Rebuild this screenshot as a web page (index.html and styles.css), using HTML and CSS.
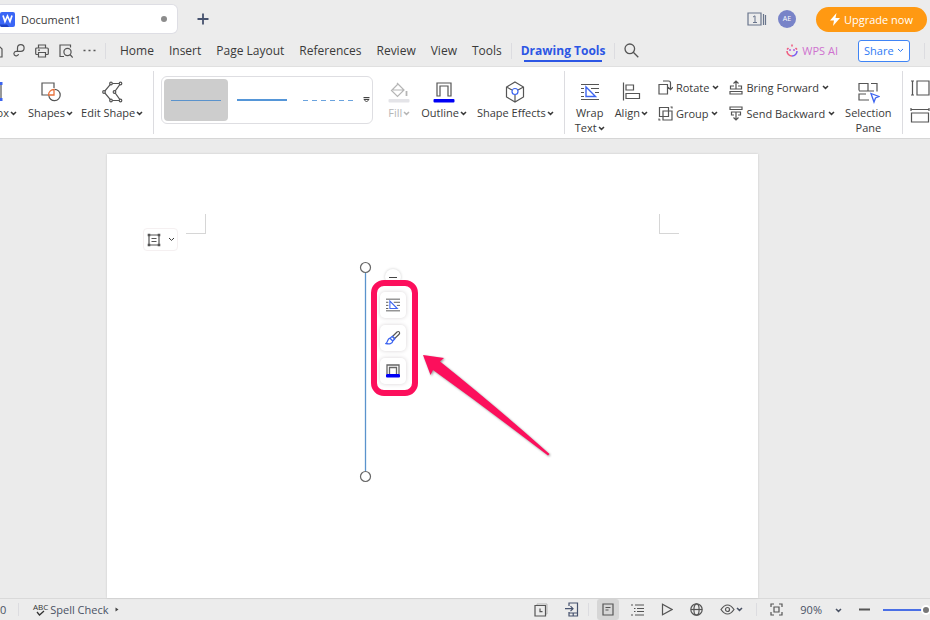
FILE: index.html
```html
<!DOCTYPE html>
<html lang="en">
<head>
    <meta charset="UTF-8">
    <meta name="viewport" content="width=device-width, initial-scale=1.0">
    <title>Document1</title>
    <link rel="stylesheet" href="styles.css">
</head>
<body>
    <!-- shared icons -->
    <svg class="defs" width="0" height="0">
        <symbol id="chev" viewBox="0 0 7 5"><path d="M1 1l2.500 2.400L6 1" fill="none" stroke="currentColor"/></symbol>
        <symbol id="wrap" viewBox="0 0 20 18">
            <path d="M1 1.500h18M1 5.500h3M11 5.500h8M1 9.500h3M15 9.500h4M1 13.500h3M1 16.500h18" fill="none" stroke="#555" stroke-width="1.200"/>
            <path d="M6 4v9.500h9.500z" fill="#fff" stroke="#3c64f0" stroke-width="1.400"/>
        </symbol>
    </svg>

    <header class="titlebar">
        <div class="doc-tab">
            <svg width="15" height="15" viewBox="0 0 15 15"><rect width="15" height="15" rx="2" fill="#3a66f6"/><path d="M0 12.500h7l2 2.500H2a2 2 0 0 1-2-2z" fill="#1d40c4"/><path d="M3 3.500l2 6 2.500-5.500 2.500 5.500 2-6" fill="none" stroke="#fff" stroke-width="1.700"/></svg>
            <span class="doc-name">Document1</span>
            <span class="dirty"></span>
        </div>
        <button class="icon-btn new-tab" aria-label="New tab">
            <svg width="12" height="12" viewBox="0 0 12 12"><path d="M6 .5v11M.5 6h11" stroke="#46526e" stroke-width="1.800"/></svg>
        </button>
        <div class="account">
            <button class="icon-btn" aria-label="Windows">
                <svg width="20" height="14" viewBox="0 0 20 14"><path d="M1 1h13v12H1zM16.500 2v11M18.500 3v10" fill="none" stroke="#69758c" stroke-width="1.200"/><path d="M6 5l2-1.200V10.500M6 10.500h4" fill="none" stroke="#69758c"/></svg>
            </button>
            <span class="avatar">AE</span>
            <button class="upgrade">
                <svg width="10" height="13" viewBox="0 0 10 13"><path d="M6.500 0L0 7.500h4L3 13l7-8H5.500z" fill="#fff"/></svg>
                Upgrade now
            </button>
        </div>
    </header>

    <nav class="menubar">
        <div class="quick">
            <button class="icon-btn save" aria-label="Save">
                <svg width="15" height="14" viewBox="0 0 15 14"><path d="M1 1h9l4 4v8H1zM4 13V8h6v5" fill="none" stroke="#555" stroke-width="1.200"/></svg>
            </button>
            <button class="icon-btn" aria-label="Export">
                <svg width="12" height="14" viewBox="0 0 12 14"><path d="M4.500 7.500V4a3.300 3.300 0 1 1 3.300 3.300H3.500A2.300 2.300 0 1 0 5.500 10" fill="none" stroke="#555" stroke-width="1.200"/></svg>
            </button>
            <button class="icon-btn" aria-label="Print">
                <svg width="14" height="14" viewBox="0 0 14 14"><path d="M3.500 4V1h7v3M3.500 10.500H1.700a1 1 0 0 1-1-1V5a1 1 0 0 1 1-1h10.600a1 1 0 0 1 1 1v4.500a1 1 0 0 1-1 1H10.500M3.500 8.500h7V13h-7zM3 6.200h2" fill="none" stroke="#555" stroke-width="1.200"/></svg>
            </button>
            <button class="icon-btn" aria-label="Print preview">
                <svg width="14" height="14" viewBox="0 0 14 14"><path d="M11.500 3.500V1H1v11.500h4" fill="none" stroke="#555" stroke-width="1.200"/><circle cx="8.500" cy="8" r="3.600" fill="none" stroke="#555" stroke-width="1.200"/><path d="M11 10.500l2.700 3" stroke="#555" stroke-width="1.200"/></svg>
            </button>
            <button class="icon-btn" aria-label="More">
                <svg width="13" height="3" viewBox="0 0 13 3"><path d="M.5.7h2v1.600h-2zM5.500.7h2v1.600h-2zM10.500.7h2v1.600h-2z" fill="#555"/></svg>
            </button>
        </div>
        <span class="sep short"></span>
        <div class="tabs">
            <button class="tab">Home</button>
            <button class="tab">Insert</button>
            <button class="tab">Page Layout</button>
            <button class="tab">References</button>
            <button class="tab">Review</button>
            <button class="tab">View</button>
            <button class="tab">Tools</button>
        </div>
        <span class="sep short"></span>
        <button class="tab active">Drawing Tools</button>
        <span class="sep short"></span>
        <button class="icon-btn" aria-label="Search">
            <svg width="15" height="15" viewBox="0 0 15 15"><circle cx="5.800" cy="5.800" r="4.800" fill="none" stroke="#555" stroke-width="1.300"/><path d="M9.300 9.300l5 5" stroke="#555" stroke-width="1.300"/></svg>
        </button>
        <div class="menu-right">
            <button class="ai">
                <svg width="12" height="13" viewBox="0 0 12 13" fill="none" stroke-width="1.500"><path d="M2.500 4L1 5.500M6 .5v2M9.500 4L11 5.500" stroke="#f0567c"/><path d="M1 7a5 4.800 0 0 0 5 5" stroke="#ef5b7e"/><path d="M6 12a5 4.800 0 0 0 5-5" stroke="#7a5cf0"/><path d="M4 5v2M8 5v2" stroke="#b45ce0"/></svg>
                WPS AI
            </button>
            <button class="share">Share <svg class="chev thin"><use href="#chev"/></svg></button>
            <span class="sep short"></span>
        </div>
    </nav>

    <section class="ribbon">
        <div class="group first">
            <button class="tool textbox">
                <svg width="24" height="24" viewBox="0 0 24 24"><path d="M4 3v17M20 3v17" stroke="#555" stroke-width="1.200"/><path d="M2.500 2h3v3h-3zM18.500 2h3v3h-3zM2.500 18h3v3h-3zM18.500 18h3v3h-3z" fill="#3c64f0"/></svg>
                <span>Text Box<svg class="chev"><use href="#chev"/></svg></span>
            </button>
            <button class="tool">
                <svg width="24" height="24" viewBox="0 0 24 24"><path d="M10 15H3V3h12v5" fill="none" stroke="#555" stroke-width="1.200"/><path d="M15.500 9.300a5.700 5.700 0 1 1-5.700 6" fill="none" stroke="#555" stroke-width="1.200"/><path d="M9.500 15a5.500 5.500 0 0 1 5.500-5.500V15z" fill="none" stroke="#e8703a" stroke-width="1.300"/></svg>
                <span>Shapes<svg class="chev"><use href="#chev"/></svg></span>
            </button>
            <button class="tool">
                <svg width="24" height="24" viewBox="0 0 24 24"><g fill="#fff" stroke="#555" stroke-width="1.200"><path d="M11 3.500h9.500L14.500 12l6 8.500H11L4 12z"/><circle cx="11" cy="3.500" r="1.300"/><circle cx="20.500" cy="3.500" r="1.300"/><circle cx="14.500" cy="12" r="1.300"/><circle cx="20.500" cy="20.500" r="1.300"/><circle cx="11" cy="20.500" r="1.300"/><circle cx="4" cy="12" r="1.300"/></g></svg>
                <span>Edit Shape<svg class="chev"><use href="#chev"/></svg></span>
            </button>
        </div>
        <span class="sep"></span>
        <div class="gallery">
            <button class="line-style selected" aria-label="Thin line"><span class="line"></span></button>
            <button class="line-style" aria-label="Thick line"><span class="line thick"></span></button>
            <button class="line-style" aria-label="Dashed line"><span class="line dashed"></span></button>
            <button class="icon-btn more" aria-label="More styles">
                <svg width="7" height="6" viewBox="0 0 7 6"><path d="M.5.600h6" stroke="#444" stroke-width="1.200"/><path d="M1 2.500h5L3.500 5z" fill="none" stroke="#444"/></svg>
            </button>
        </div>
        <div class="group">
            <button class="tool" disabled>
                <svg width="24" height="24" viewBox="0 0 24 24"><path d="M10 3l7 7-6.500 6.500-6-6L11 4M17 10H6" fill="none" stroke="#b5b5b5" stroke-width="1.200"/><path d="M19.500 11v5" stroke="#b5b5b5" stroke-width="1.800"/><rect x="1.500" y="19" width="21" height="3.500" rx="1" fill="#e4e4e8"/></svg>
                <span>Fill<svg class="chev"><use href="#chev"/></svg></span>
            </button>
            <button class="tool">
                <svg width="24" height="24" viewBox="0 0 24 24"><path d="M5 16V3h14v13h-3V6H8v10z" fill="none" stroke="#555" stroke-width="1.200"/><rect x="1.500" y="19" width="21" height="3.500" rx="1" fill="#0000f5"/></svg>
                <span>Outline<svg class="chev"><use href="#chev"/></svg></span>
            </button>
            <button class="tool">
                <svg width="24" height="24" viewBox="0 0 24 24"><path d="M12 2l8.500 5v10L12 22l-8.500-5V7zM3.500 7L9 10M20.500 7L15 10M12 15v7" fill="none" stroke="#555" stroke-width="1.200"/><circle cx="12" cy="11.500" r="3" fill="none" stroke="#3c64f0" stroke-width="1.200"/></svg>
                <span>Shape Effects<svg class="chev"><use href="#chev"/></svg></span>
            </button>
        </div>
        <span class="sep"></span>
        <div class="group">
            <button class="tool">
                <svg width="24" height="24" viewBox="-2 -3 24 24"><use href="#wrap" width="20" height="18"/></svg>
                <span>Wrap<br>Text<svg class="chev"><use href="#chev"/></svg></span>
            </button>
            <button class="tool">
                <svg width="24" height="24" viewBox="0 0 24 24"><path d="M4.500 2.500v18M7 5h7.500v5H7zM7 13.500h13.500v5H7z" fill="none" stroke="#555" stroke-width="1.200"/></svg>
                <span>Align<svg class="chev"><use href="#chev"/></svg></span>
            </button>
            <div class="stack">
                <button class="row-tool">
                    <svg width="15" height="15" viewBox="0 0 15 15"><path d="M1 4.500h8.500V14H1zM5 1h5.500q2 0 2 2v6.500M10 7.200l2.500 2.500L15 7.200" fill="none" stroke="#555" stroke-width="1.200"/></svg>
                    Rotate<svg class="chev"><use href="#chev"/></svg>
                </button>
                <button class="row-tool">
                    <svg width="15" height="15" viewBox="0 0 15 15"><path d="M1.500 1.500h9v9h-9zM5 5h9v9H5z" fill="none" stroke="#555" stroke-width="1.200"/><path d="M12.500 1h1.500v1.500M1 12.500V14h1.500" fill="none" stroke="#555" stroke-width="1.200"/></svg>
                    Group<svg class="chev"><use href="#chev"/></svg>
                </button>
            </div>
            <div class="stack">
                <button class="row-tool">
                    <svg width="14" height="15" viewBox="0 0 14 15"><path d="M1 11.500h12v2.500H1zM7 9V1M4.500 3.500L7 1l2.500 2.500M5 6H1.500v3h11V6H9" fill="none" stroke="#555" stroke-width="1.200"/></svg>
                    Bring Forward<svg class="chev"><use href="#chev"/></svg>
                </button>
                <button class="row-tool">
                    <svg width="14" height="15" viewBox="0 0 14 15"><path d="M1 1h12v2.500H1zM7 6v8M4.500 11.500L7 14l2.500-2.500M5 9H2.500V6h9v3H9" fill="none" stroke="#555" stroke-width="1.200"/></svg>
                    Send Backward<svg class="chev"><use href="#chev"/></svg>
                </button>
            </div>
            <button class="tool">
                <svg width="24" height="24" viewBox="0 0 24 24"><path d="M3 10.500V3.500h9v7.500H3M15 3.500h6v8M3 14v6h10M12 11h6M3 17v-3h7" fill="none" stroke="#555" stroke-width="1.200"/><path d="M15 13.500l8 3-3.500 1.500-1.500 4z" fill="#fff" stroke="#3c64f0" stroke-width="1.300"/></svg>
                <span>Selection<br>Pane</span>
            </button>
        </div>
        <span class="sep"></span>
        <div class="stack size">
            <svg width="24" height="16" viewBox="0 0 24 16"><path d="M2.500 1v14M1 1h3M1 15h3M7 1h12v14H7z" fill="none" stroke="#555" stroke-width="1.200"/></svg>
            <svg width="24" height="16" viewBox="0 0 24 16"><path d="M1 2.500h18M1 1v3M19 1v3M1.500 6h17v9h-17z" fill="none" stroke="#555" stroke-width="1.200"/></svg>
        </div>
    </section>

    <main class="workspace">
        <div class="page">
            <div class="corners">
                <span class="corner left"></span>
                <span class="corner right"></span>
            </div>
            <div class="layout-opts">
                <button class="icon-btn" aria-label="Layout options">
                    <svg width="14" height="14" viewBox="0 0 14 14"><path d="M2 2h10v10H2zM4.500 5.500h5M4.500 8.500h5" fill="none" stroke="#555" stroke-width="1.200"/><path d="M.7.700h2.600v2.600H.7zM10.700.700h2.600v2.600h-2.600zM.7 10.700h2.600v2.600H.7zM10.700 10.700h2.600v2.600h-2.600z" fill="#555"/></svg>
                </button>
                <button class="icon-btn" aria-label="Layout menu"><svg class="chev thin"><use href="#chev"/></svg></button>
            </div>

            <!-- the selected line with its two handles -->
            <svg class="shape" width="14" height="222" viewBox="0 0 14 222">
                <path d="M7.500 12v198" stroke="#5b93cc" stroke-width="1.300"/>
                <circle cx="7.500" cy="6.500" r="5" fill="#fff" stroke="#666" stroke-width="1.200"/>
                <circle cx="7.500" cy="215.500" r="5" fill="#fff" stroke="#666" stroke-width="1.200"/>
            </svg>

            <div class="float-bar">
                <button class="collapse" aria-label="Collapse"></button>
                <button class="float-btn" aria-label="Wrap text"><svg width="16" height="14"><use href="#wrap"/></svg></button>
                <button class="float-btn" aria-label="Shape style">
                    <svg width="16" height="16" viewBox="0 0 16 16"><path d="M7.500 6.500L12 2q1.500-1 2.300 0t-.2 2.300L9.500 8.700z" fill="none" stroke="#555" stroke-width="1.200"/><path d="M7.300 6.300l2.500 2.500-2 2.200-2.800-2.800zM5 8.200C2 8.800 3.200 12 1 13.500c3 .8 6.500.4 6.800-2.500" fill="none" stroke="#3c64f0" stroke-width="1.300"/></svg>
                </button>
                <button class="float-btn" aria-label="Outline">
                    <svg width="16" height="16" viewBox="0 0 16 16"><path d="M2 11V2h12v9M4.500 11V4.500h7V11" fill="none" stroke="#666" stroke-width="1.300"/><rect x="1" y="11" width="14" height="3.500" rx="1" fill="#0000f5"/></svg>
                </button>
            </div>
            <div class="highlight"></div>
            <svg class="arrow" width="134" height="108" viewBox="0 0 134 108">
                <path d="M3 3l21 3-4 3.500Q72 51 129.500 102l-1.500 1.500Q70 59 13 18l-2.500 5z" fill="#fc0f5c"/>
            </svg>
        </div>
    </main>

    <footer class="statusbar">
        <span class="count">0</span>
        <span class="sep tiny"></span>
        <button class="spell">
            <span class="abc">ABC<svg width="9" height="6" viewBox="0 0 9 6"><path d="M1 2l2.500 3L8 1" fill="none" stroke="#333" stroke-width="1.300"/></svg></span>
            Spell Check
            <svg width="4" height="5" viewBox="0 0 4 5"><path d="M.5.5L3.500 2.500l-3 2z" fill="#444"/></svg>
        </button>
        <div class="views">
            <div class="sync">
                <button class="icon-btn" aria-label="History"><svg width="14" height="14" viewBox="0 0 14 14"><path d="M3 2.500V1h10v10h-1.500" fill="none" stroke="#b5b5b5"/><path d="M1 2.500h10.500V13H1zM6 5.500v3.200h2.500" fill="none" stroke="#555" stroke-width="1.200"/></svg></button>
                <button class="icon-btn" aria-label="Send to phone"><svg width="14" height="15" viewBox="0 0 14 15"><path d="M4 4V1h8.500v13H4v-4M4 11h8.500M8.200 11v3M0 6.700h8M5.500 4.200L8 6.700 5.500 9.200" fill="none" stroke="#46526e" stroke-width="1.200"/></svg></button>
            </div>
            <span class="sep tiny"></span>
            <button class="icon-btn current" aria-label="Page view"><svg width="12" height="13" viewBox="0 0 12 13"><path d="M1 1h10v11H1zM3.500 4.500h5M3.500 7h3" fill="none" stroke="#555" stroke-width="1.200"/></svg></button>
            <button class="icon-btn" aria-label="Outline view"><svg width="13" height="12" viewBox="0 0 13 12"><path d="M0 1h2M4 1h9M3 4.500h1.500M6 4.500h7M3 7.500h1.500M6 7.500h7M0 11h2M4 11h9" stroke="#555" stroke-width="1.200"/></svg></button>
            <button class="icon-btn" aria-label="Play"><svg width="12" height="13" viewBox="0 0 12 13"><path d="M1.500 1.200v10.600L11 6.500z" fill="none" stroke="#555" stroke-width="1.200"/></svg></button>
            <button class="icon-btn" aria-label="Web view"><svg width="13" height="13" viewBox="0 0 13 13"><g fill="none" stroke="#555" stroke-width="1.200"><circle cx="6.500" cy="6.500" r="5.700"/><ellipse cx="6.500" cy="6.500" rx="2.600" ry="5.700"/><path d="M1 6.500h11"/></g></svg></button>
            <button class="icon-btn" aria-label="Eye care"><svg width="15" height="11" viewBox="0 0 15 11"><path d="M1 5.500Q4 1 7.500 1T14 5.500Q11 10 7.500 10T1 5.500z" fill="none" stroke="#555" stroke-width="1.200"/><circle cx="7.500" cy="5.500" r="2" fill="none" stroke="#555" stroke-width="1.200"/></svg><svg class="chev"><use href="#chev"/></svg></button>
            <span class="sep tiny"></span>
            <button class="icon-btn" aria-label="Fit page"><svg width="13" height="13" viewBox="0 0 13 13"><path d="M1 4V1h3M9 1h3v3M12 9v3H9M4 12H1V9M4 4h5v5H4z" fill="none" stroke="#555" stroke-width="1.200"/></svg></button>
            <button class="zoom">90%<svg class="chev"><use href="#chev"/></svg></button>
            <button class="icon-btn" aria-label="Zoom out"><svg width="11" height="3" viewBox="0 0 11 3"><path d="M0 1.500h11" stroke="#555" stroke-width="2"/></svg></button>
            <div class="slider"><input type="range" min="0" max="100" value="50" aria-label="Zoom level"></div>
        </div>
    </footer>
</body>
</html>
```
FILE: styles.css
```css
* {
    box-sizing: border-box;
}

body {
    margin: 0;
    height: 100vh;
    display: flex;
    flex-direction: column;
    overflow: hidden;
    background: #ececec;
    color: #3a3a3a;
    font-family: "Open Sans", "Noto Sans", sans-serif;
    font-size: 11px;
    line-height: 15px;
}

button {
    padding: 0;
    border: none;
    background: none;
    color: inherit;
    font: inherit;
    white-space: nowrap;
    cursor: pointer;
}

svg {
    flex: none;
}

.defs {
    position: absolute;
}

.icon-btn {
    display: flex;
    align-items: center;
    justify-content: center;
}

.chev {
    width: 7px;
    height: 5px;
    margin-left: 1px;
    vertical-align: 1px;
    stroke-width: 1.5px;
}

.chev.thin {
    margin-left: 0;
    stroke-width: 1px;
}

.sep {
    flex: none;
    width: 1px;
    height: 63px;
    background: #dcdce0;
}

.sep.short {
    height: 16px;
}

.sep.tiny {
    height: 13px;
}

/* title bar */
.titlebar {
    flex: none;
    height: 38px;
    display: flex;
    align-items: center;
}

.doc-tab {
    width: 178px;
    height: 30px;
    display: flex;
    align-items: center;
    gap: 6px;
    padding-right: 10px;
    background: #fff;
    border: 1px solid #dedee4;
    border-left: none;
    border-radius: 0 6px 6px 0;
}

.doc-name {
    flex: 1;
}

.dirty {
    width: 6px;
    height: 6px;
    border-radius: 50%;
    background: #8c8c8c;
}

.new-tab {
    margin-left: 19px;
}

.account {
    display: flex;
    align-items: center;
    gap: 11px;
    margin-left: auto;
    padding-right: 3px;
}

.avatar {
    width: 18px;
    height: 18px;
    border-radius: 50%;
    background: #7883c8;
    color: #fff;
    font-size: 7px;
    line-height: 18px;
    text-align: center;
}

.upgrade {
    display: flex;
    align-items: center;
    justify-content: center;
    gap: 4px;
    width: 111px;
    height: 25px;
    margin-left: 9px;
    border-radius: 13px;
    background: #ff9912;
    color: #fff;
}

/* menu bar */
.menubar {
    flex: none;
    height: 29px;
    display: flex;
    align-items: center;
    gap: 9px;
    padding-bottom: 3px;
    border-bottom: 1px solid #e0e0e0;
}

.quick {
    display: flex;
    align-items: center;
    gap: 10px;
}

.save {
    width: 3px;
    overflow: hidden;
    justify-content: flex-end;
}

.tabs {
    display: flex;
    gap: 15px;
    padding-left: 5px;
}

.tab {
    font-size: 12px;
}

.tab.active {
    position: relative;
    color: #2c56e4;
    font-weight: bold;
}

.tab.active::after {
    content: "";
    position: absolute;
    left: 3px;
    right: 3px;
    bottom: -4px;
    height: 2px;
    background: #2c56e4;
}

.menu-right {
    display: flex;
    align-items: center;
    gap: 14px;
    margin-left: auto;
    padding-right: 5px;
}

.ai {
    display: flex;
    align-items: center;
    gap: 4px;
    margin-right: 6px;
    color: #cf72cf;
}

.share {
    display: flex;
    align-items: center;
    justify-content: space-between;
    width: 52px;
    height: 22px;
    padding: 0 5px;
    border: 1px solid #3f84f5;
    border-radius: 3px;
    background: #fff;
    color: #2f7bf5;
}

/* ribbon */
.ribbon {
    flex: none;
    height: 72px;
    display: flex;
    padding-top: 4px;
    overflow: hidden;
    background: #fff;
    border-bottom: 1px solid #d6d6d6;
}

.group {
    flex: none;
    display: flex;
    align-items: flex-start;
    gap: 10px;
    padding: 9px 10px 0;
}

.group.first {
    gap: 8px;
    padding-left: 0;
}

.tool {
    display: flex;
    flex-direction: column;
    align-items: center;
    gap: 1px;
}

.tool:disabled {
    color: #b5b5b5;
}

/* scrolled half out of the ribbon */
.textbox {
    width: 20px;
    padding-right: 3px;
    overflow: hidden;
    align-items: flex-end;
}

.textbox > svg {
    margin-right: 12px;
}

.gallery {
    flex: none;
    display: flex;
    align-items: center;
    gap: 2px;
    width: 212px;
    height: 48px;
    margin: 5px 4px 0 7px;
    padding: 0 2px;
    border: 1px solid #dedee2;
    border-radius: 6px;
}

.line-style {
    flex: none;
    display: flex;
    align-items: center;
    width: 64px;
    height: 42px;
    padding: 0 7px;
    border-radius: 4px;
}

.line-style.selected {
    background: #cdcdcd;
}

.line {
    flex: 1;
    border-top: 1px solid #5b93cc;
}

.line.thick {
    border-top: 2px solid #5596d8;
}

.line.dashed {
    height: 1px;
    border: none;
    background: repeating-linear-gradient(90deg, #6aa3de 0 5px, transparent 5px 9px);
}

.more {
    flex: 1;
}

.stack {
    display: flex;
    flex-direction: column;
    gap: 11px;
}

.row-tool {
    display: flex;
    align-items: center;
    gap: 3px;
}

.row-tool .chev {
    margin-left: 0;
}

.size {
    padding: 9px 0 0 7px;
}

/* document */
.workspace {
    flex: 1;
    display: flex;
    min-height: 0;
    padding: 15px 172px 0 107px;
    background: #ebebeb;
}

.page {
    position: relative;
    flex: 1;
    background: #fff;
    box-shadow: 0 0 2px #c8c8c8;
}

.corners {
    display: flex;
    justify-content: space-between;
    padding: 60px 79px 0;
}

.corner {
    width: 20px;
    height: 20px;
    border-bottom: 1px solid #d6d6d6;
}

.corner.left {
    border-right: 1px solid #d6d6d6;
}

.corner.right {
    border-left: 1px solid #d6d6d6;
}

.layout-opts {
    position: absolute;
    left: 36px;
    top: 74px;
    display: flex;
    align-items: center;
    gap: 7px;
    height: 23px;
    padding: 0 2px 0 3px;
    border: 1px solid #f5f0f1;
    border-radius: 4px;
}

.shape {
    position: absolute;
    left: 251px;
    top: 107px;
}

.float-bar {
    position: absolute;
    left: 273px;
    top: 115px;
    display: flex;
    flex-direction: column;
    align-items: center;
    gap: 7px;
}

.collapse {
    width: 16px;
    height: 16px;
    border-radius: 50%;
    background: linear-gradient(#444, #444) center / 8px 1px no-repeat #fff;
    box-shadow: 0 0 3px #ccc;
}

.float-btn {
    display: flex;
    align-items: center;
    justify-content: center;
    width: 26px;
    height: 26px;
    border-radius: 5px;
    background: #fff;
    box-shadow: 0 0 4px #d8d4d6;
}

.highlight {
    position: absolute;
    left: 264px;
    top: 126px;
    width: 47px;
    height: 116px;
    border: 6px solid #fc0f5c;
    border-radius: 13px;
}

.arrow {
    position: absolute;
    left: 313px;
    top: 198px;
    filter: drop-shadow(1px 1px 1px #999);
}

/* status bar */
.statusbar {
    flex: none;
    height: 22px;
    display: flex;
    align-items: center;
    border-top: 1px solid #d9d9d9;
    color: #4a5264;
}

.count {
    width: 18px;
}

.spell {
    display: flex;
    align-items: center;
    gap: 2px;
    margin-left: 14px;
}

.spell > svg {
    margin-left: 4px;
}

.abc {
    display: flex;
    flex-direction: column;
    align-items: center;
    color: #333;
    font-size: 8px;
    line-height: 7px;
}

.views {
    display: flex;
    align-items: center;
    gap: 17px;
    height: 100%;
    margin-left: auto;
}

.views .sep {
    margin: 0 -4px;
}

.sync {
    display: flex;
    gap: 17px;
    margin-right: -4px;
}

.current {
    width: 22px;
    height: 100%;
    margin: 0 -5px;
    border-radius: 3px;
    background: #d6d6d6;
}

.zoom .chev {
    margin-left: 13px;
}

.slider {
    width: 47px;
    margin-left: -4px;
    overflow: hidden;
    display: flex;
}

.slider input {
    flex: none;
    appearance: none;
    width: 86px;
    height: 12px;
    margin: 0;
    background: linear-gradient(#4a6fe6, #4a6fe6) left center / 50% 2px no-repeat;
}

.slider input::-webkit-slider-thumb {
    appearance: none;
    width: 10px;
    height: 10px;
    border: 2px solid #fff;
    border-radius: 50%;
    background: #777;
}
```
